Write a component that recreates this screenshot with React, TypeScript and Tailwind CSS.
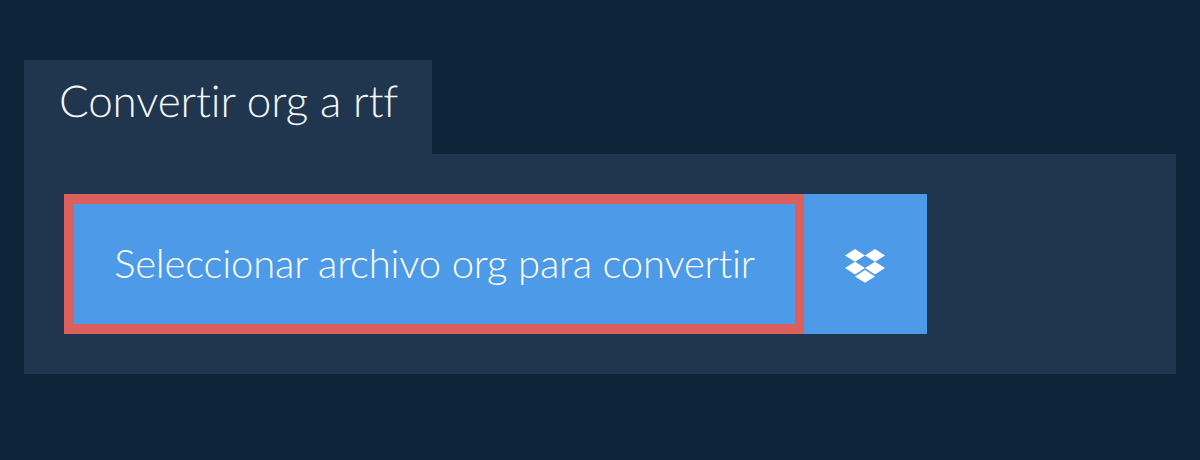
import React from 'react';

const DropboxIcon = () => (
  <svg width="40" height="34" viewBox="0 0 40 34" fill="#ffffff" className="mt-1 -ml-[2px]">
    <path d="M10 0 L20 6.4 L10 12.7 L0 6.4 Z" />
    <path d="M30 0 L40 6.4 L30 12.7 L20 6.4 Z" />
    <path d="M0 19 L10 12.7 L20 19 L10 25.4 Z" />
    <path d="M30 12.7 L40 19 L30 25.4 L20 19 Z" />
    <path d="M10 27.4 L20 21 L30 27.4 L20 33.8 Z" />
  </svg>
);

const App = () => {
  return (
    <div className="w-[1200px] h-[460px] bg-[#0e2539] pt-[60px] px-6 font-['Lato',sans-serif] [font-variant-ligatures:none] [text-rendering:geometricPrecision] overflow-hidden">
      <h1 className="w-[408px] h-[94px] bg-[#20364e] pl-[35px] pt-[15px] text-[44px] leading-[52px] tracking-[-0.13px] font-light text-[#f4f7fa] whitespace-nowrap">Convertir org a rtf</h1>
      <section className="bg-[#20364e] h-[220px] p-10 flex">
        <button className="w-[740px] h-[140px] bg-[#4d9ae8] border-[10px] border-r-[9px] border-[#dc5f5c] pb-[2px] text-white text-[40px] tracking-[-0.16px] font-light whitespace-nowrap">Seleccionar archivo org para convertir</button>
        <button className="w-[123px] h-[140px] bg-[#4d9ae8] flex items-center justify-center"><DropboxIcon /></button>
      </section>
    </div>
  );
};

export default App;
